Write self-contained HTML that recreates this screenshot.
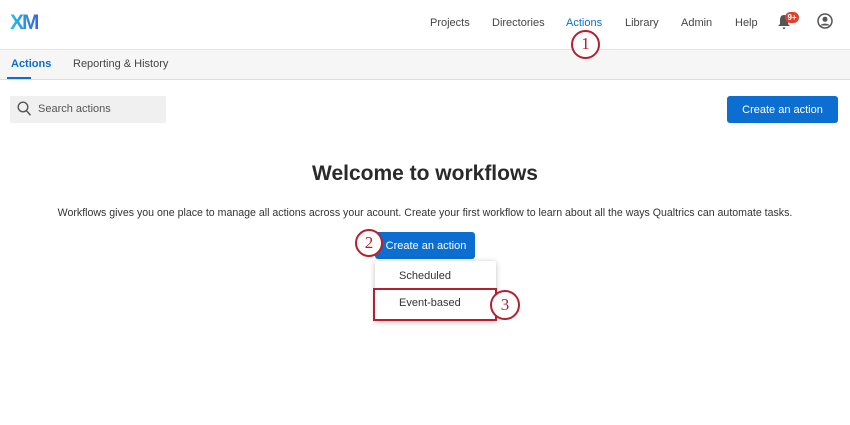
<!DOCTYPE html><html><head><style>
body{margin:0;width:850px;height:425px;background:#fff;font-family:"Liberation Sans",sans-serif;position:relative;overflow:hidden;color:#333}
.a{position:absolute}
.nav{font-size:11px;color:#444;top:17px}
.circ{position:absolute;border:2.5px solid #b5202e;border-radius:50%;background:#fff;box-sizing:border-box;text-align:center;color:#b5202e;font-family:"Liberation Serif",serif;font-size:17px;z-index:5}
</style></head><body>
<div class="a" style="left:10px;top:11px;font-size:21px;font-weight:bold;letter-spacing:-2px;background:linear-gradient(90deg,#1fc5e6,#3a62e8);-webkit-background-clip:text;color:transparent">XM</div>
<div class="a nav" style="left:430px">Projects</div>
<div class="a nav" style="left:492px">Directories</div>
<div class="a nav" style="left:566px;color:#0b6ed0">Actions</div>
<div class="a nav" style="left:625px">Library</div>
<div class="a nav" style="left:681px">Admin</div>
<div class="a nav" style="left:735px">Help</div>
<svg class="a" style="left:777px;top:14px" width="14" height="16" viewBox="0 0 14 16"><path d="M7 1C4 1 3 3.5 3 6v4l-2 2h12l-2-2V6c0-2.5-1-5-4-5zM5.5 13.5a1.5 1.5 0 003 0z" fill="#555"/></svg>
<div class="a" style="left:785px;top:12px;width:14px;height:11px;border-radius:6px;background:#e0402a;color:#fff;font-size:8px;font-weight:bold;text-align:center;line-height:11px">9+</div>
<svg class="a" style="left:817px;top:13px" width="16" height="16" viewBox="0 0 16 16"><circle cx="8" cy="8" r="7" fill="none" stroke="#555" stroke-width="1.5"/><circle cx="8" cy="6.3" r="2.5" fill="#555"/><path d="M3.5 12.5c1-2.5 8-2.5 9 0" fill="#555"/></svg>
<div class="a" style="left:0;top:49px;width:850px;height:31px;background:#f6f6f6;border-top:1px solid #e6e6e6;border-bottom:1px solid #ddd;box-sizing:border-box"></div>
<div class="circ" style="left:571px;top:30px;width:29px;height:29px;line-height:24px">1</div>
<div class="a" style="left:11px;top:58px;font-size:11px;font-weight:bold;color:#0b6ed0">Actions</div>
<div class="a" style="left:7px;top:77px;width:24px;height:2px;background:#0b6ed0"></div>
<div class="a" style="left:73px;top:58px;font-size:11px;color:#444">Reporting &amp; History</div>
<div class="a" style="left:10px;top:96px;width:156px;height:27px;background:#f0f0f0;border-radius:2px"></div>
<svg class="a" style="left:17px;top:101px" width="15" height="16" viewBox="0 0 15 16"><circle cx="6" cy="6" r="4.8" fill="none" stroke="#555" stroke-width="1.4"/><path d="M9.5 9.7l4 4.5" stroke="#555" stroke-width="1.5"/></svg>
<div class="a" style="left:38px;top:103px;font-size:11px;color:#555">Search actions</div>
<div class="a" style="left:727px;top:96px;width:111px;height:27px;background:#0b6ed0;border-radius:3px;color:#fff;font-size:11px;text-align:center;line-height:28px">Create an action</div>
<div class="a" style="left:0;width:850px;top:162px;text-align:center;font-size:21px;font-weight:bold;color:#2a2a2a">Welcome to workflows</div>
<div class="a" style="left:0;width:850px;top:207px;text-align:center;font-size:10.6px;color:#333">Workflows gives you one place to manage all actions across your acount. Create your first workflow to learn about all the ways Qualtrics can automate tasks.</div>
<div class="a" style="left:375px;top:232px;width:100px;height:27px;background:#0b6ed0;border-radius:3px;color:#fff;font-size:11px;text-align:center;line-height:28px;padding-left:2px;box-sizing:border-box">Create an action</div>
<div class="circ" style="left:355px;top:229px;width:28px;height:28px;line-height:23px">2</div>
<div class="a" style="left:375px;top:261px;width:121px;height:60px;background:#fff;box-shadow:0 1px 6px rgba(0,0,0,.25);border-radius:2px"></div>
<div class="a" style="left:399px;top:270px;font-size:11px;color:#333">Scheduled</div>
<div class="a" style="left:373px;top:288px;width:124px;height:33px;border:2.5px solid #b5202e;box-sizing:border-box"></div>
<div class="a" style="left:399px;top:297px;font-size:11px;color:#333">Event-based</div>
<div class="circ" style="left:490px;top:290px;width:30px;height:30px;line-height:25px">3</div>
</body></html>
